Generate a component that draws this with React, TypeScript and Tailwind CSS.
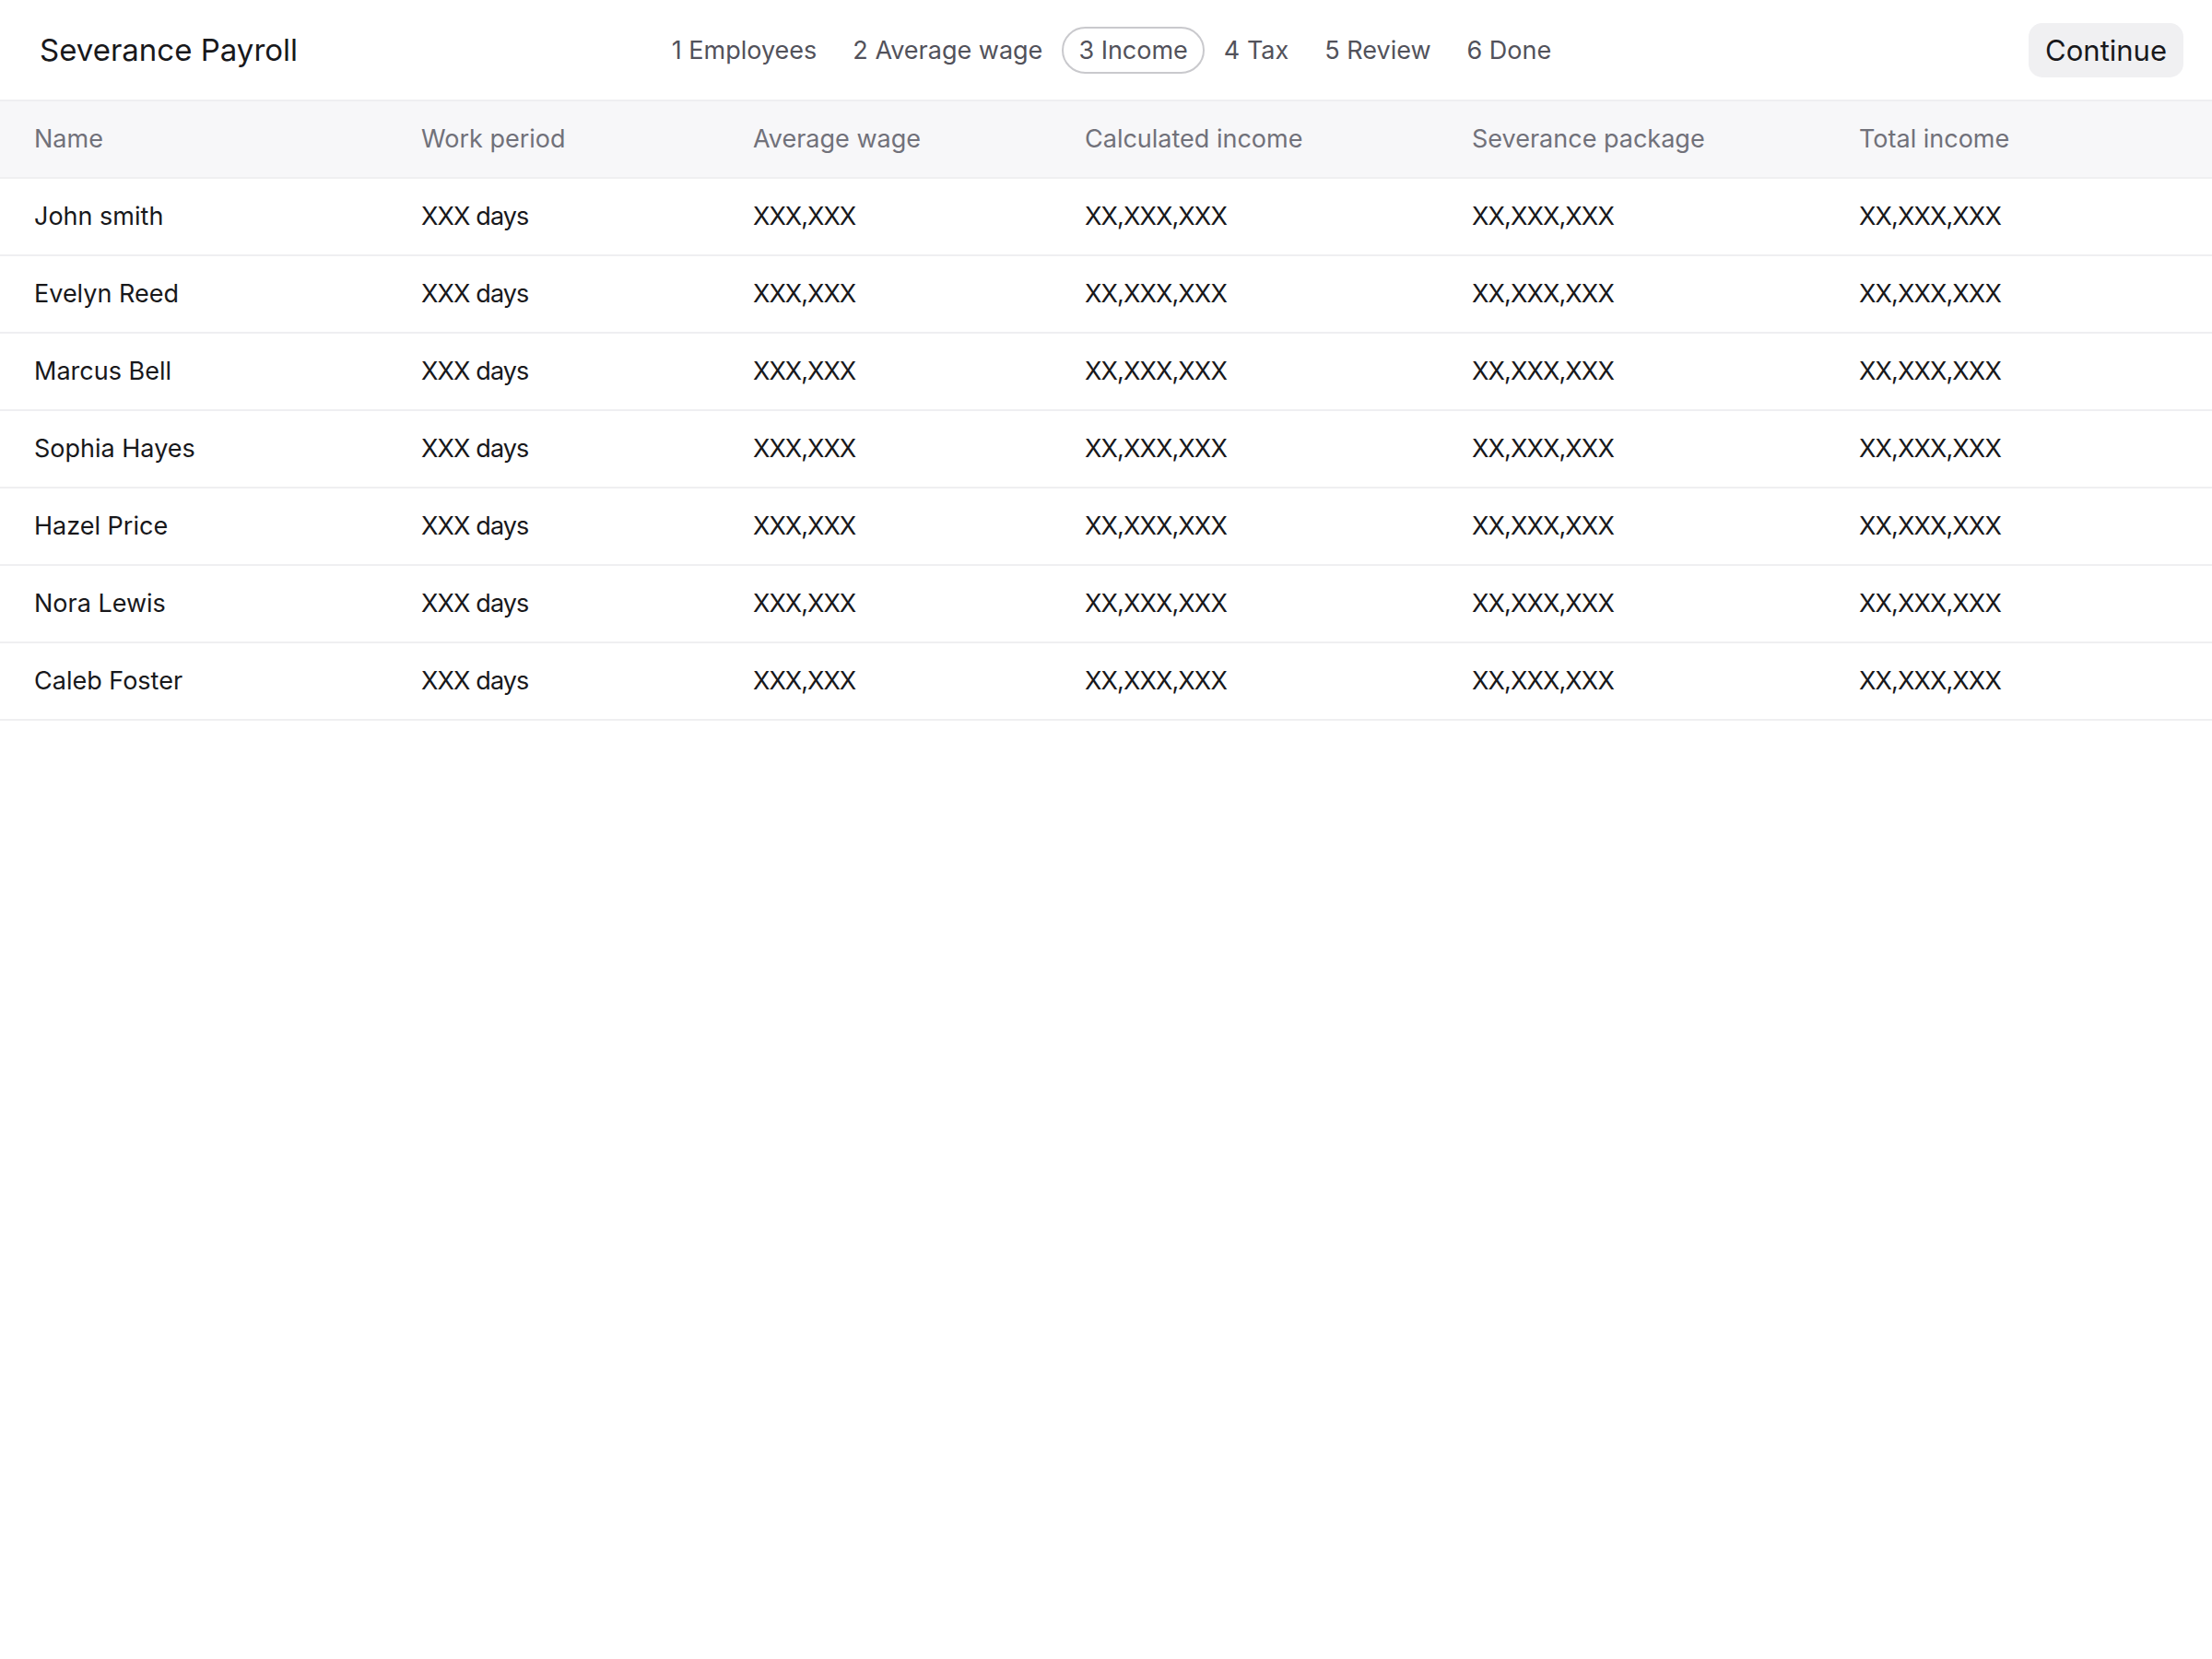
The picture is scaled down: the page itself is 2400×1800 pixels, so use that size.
import React from 'react';

const steps = ['1 Employees', '2 Average wage', '3 Income', '4 Tax', '5 Review', '6 Done'];
const activeStep = 2;

const columns = ['Name', 'Work period', 'Average wage', 'Calculated income', 'Severance package', 'Total income'];

const employees = [
  'John smith',
  'Evelyn Reed',
  'Marcus Bell',
  'Sophia Hayes',
  'Hazel Price',
  'Nora Lewis',
  'Caleb Foster',
];

export default function App() {
  return (
    <div
      className="min-h-[1800px] w-[2400px] bg-white text-[#18181b]"
      style={{ fontFamily: 'Inter, "Noto Sans", sans-serif' }}
    >
      {/* Top bar */}
      <header className="grid h-[110px] grid-cols-[1fr_auto_1fr] items-center border-b-2 border-[#efeff1] pl-[43px] pr-[31px]">
        <h1 className="text-[33px] font-normal leading-none">Severance Payroll</h1>
        <nav className="flex items-center gap-[3px]">
          {steps.map((step, i) => (
            <span
              key={step}
              className={
                i === activeStep
                  ? 'flex h-[51px] items-center rounded-full border-2 border-[#c9c9cd] px-[16px] pt-[2px] text-[27px] text-[#52525b]'
                  : 'flex h-[51px] items-center rounded-full border-2 border-transparent px-[16px] pt-[2px] text-[27px] text-[#52525b]'
              }
            >
              {step}
            </span>
          ))}
        </nav>
        <div className="flex justify-end">
          <button className="h-[59px] rounded-[15px] bg-[#f0f0f2] px-[18px] text-[31px] leading-none text-[#18181b]">
            Continue
          </button>
        </div>
      </header>

      {/* Table */}
      <table className="w-full table-fixed border-collapse text-[27px]">
        <colgroup>
          <col className="w-[420px]" />
          <col className="w-[360px]" />
          <col className="w-[360px]" />
          <col className="w-[420px]" />
          <col className="w-[420px]" />
          <col />
        </colgroup>
        <thead>
          <tr className="h-[83px] border-b-2 border-[#efeff1] bg-[#f7f7f9]">
            {columns.map((c) => (
              <th key={c} className="pl-[37px] text-left font-normal text-[#71717a]">
                {c}
              </th>
            ))}
          </tr>
        </thead>
        <tbody>
          {employees.map((name) => (
            <tr key={name} className="h-[84px] border-b-2 border-[#efeff1]">
              <td className="pl-[37px]">{name}</td>
              <td className="pl-[37px] tracking-[-0.9px]">XXX days</td>
              <td className="pl-[37px] tracking-[-1px]">XXX,XXX</td>
              <td className="pl-[37px] tracking-[-0.9px]">XX,XXX,XXX</td>
              <td className="pl-[37px] tracking-[-0.9px]">XX,XXX,XXX</td>
              <td className="pl-[37px] tracking-[-0.9px]">XX,XXX,XXX</td>
            </tr>
          ))}
        </tbody>
      </table>
    </div>
  );
}
